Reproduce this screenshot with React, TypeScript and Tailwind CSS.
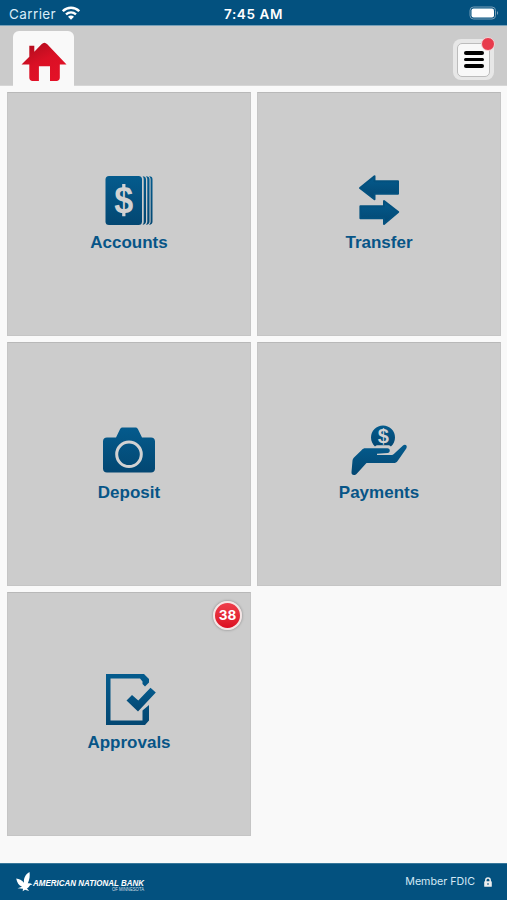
import type { ReactNode } from "react";

const NAVY = "#03517f";

function Icon({ children }: { children: ReactNode }) {
  return (
    <svg width="100" height="60" viewBox="-1 0 100 60" fill="url(#tile-blue)" aria-hidden="true">
      {children}
    </svg>
  );
}

function AccountsIcon() {
  return (
    <Icon>
      <rect x="25.5" y="11" width="36.5" height="49" rx="3.5" />
      <path d="M62.5 11.3c2.2 0 3.5 1.2 3.5 3.2v42c0 2-1.3 3.2-3.500 3.200 1-.8 1.200-1.800 1.200-3.200v-42c0-1.400-.2-2.400-1.200-3.200Z" />
      <path d="M65.800 11.300c2.600 0 3.700 1.200 3.700 3.200v42c0 2-1.100 3.200-3.700 3.200 1-.8 1.500-1.800 1.500-3.200v-42c0-1.400-.5-2.400-1.500-3.200Z" />
      <path d="M69 11.300c2.700 0 3.500 1.200 3.500 3.200v42c0 2-.8 3.200-3.500 3.200 1-.8 1.600-1.800 1.600-3.200v-42c0-1.400-.6-2.400-1.600-3.200Z" />
      <text x="34.300" y="47.500" fontSize="38" fontWeight="700" fill="#d2d2d2" textLength="19" lengthAdjust="spacingAndGlyphs">
        $
      </text>
      <path d="M42.200 19h3.200v5h-3.200ZM42.200 46.500h3.200v4.800h-3.200Z" fill="#d2d2d2" />
    </Icon>
  );
}

function TransferIcon() {
  return (
    <Icon>
      <g stroke={NAVY} strokeWidth="2" strokeLinejoin="round">
        <path d="M30 23 44.500 11.200V16.300H68V28.700H44.500V34.200Z" />
        <path d="M68.200 47 54 36V41.200H30.400V53.300H54V59Z" />
      </g>
    </Icon>
  );
}

function DepositIcon() {
  return (
    <Icon>
      <path d="M27 22.500h9l4-8.200c.6-1.300 1.300-1.800 2.700-1.800h12.600c1.400 0 2.100.5 2.700 1.800l4 8.200h9c2.500 0 4 1.500 4 4v27c0 2.500-1.500 4-4 4H27c-2.500 0-4-1.500-4-4v-27c0-2.500 1.500-4 4-4Z" />
      <circle cx="49" cy="39.300" r="12.300" fill="none" stroke="#d2d2d2" strokeWidth="3" />
    </Icon>
  );
}

function PaymentsIcon() {
  return (
    <Icon>
      <path d="M45 31.500C42.700 29.300 41 26.300 41 22.500a12 12 0 0 1 24 0c0 3.600-1.500 6.700-4.100 9-.7-1-1.600-1.300-3.300-1.300H48c-1.400 0-2.300.4-3 1.300Z" />
      <text x="53.200" y="28" textAnchor="middle" fontSize="20" fontWeight="700" fill="#d2d2d2">
        $
      </text>
      <path d="M35.500 33.200H57.500c3 0 3 4.600 0 4.800L47 38.800V40H61c1.500 0 2.300-.4 3.100-1.200L73 30.400c2.500-1.700 4.800.5 3.300 3L67.600 46c-1.100 1.500-2 2-4 2H36.500L26.500 59c-.8.800-1.500 1-2.500 1-1.800 0-2.700-1.200-2.500-3L22.500 45.500c.2-1.200.6-2 1.500-3l7.500-7.300c1.200-1.400 2.300-2 4-2Z" />
    </Icon>
  );
}

function ApprovalsIcon() {
  return (
    <Icon>
      <path d="M26 9h38l5 5v3.500L65 21.500 62.500 19v-2.500L60 13.500H30.500v42h32V45.500L69 40v15.500l-4 4.500H26Z" />
      <path d="m46.500 35.500 5.500-5.500 6.300 5.500L70.500 22.800l5.300 4.700L58 46.500Z" />
    </Icon>
  );
}

const TILES = [
  { label: "Accounts", icon: <AccountsIcon /> },
  { label: "Transfer", icon: <TransferIcon /> },
  { label: "Deposit", icon: <DepositIcon /> },
  { label: "Payments", icon: <PaymentsIcon /> },
  { label: "Approvals", icon: <ApprovalsIcon />, badge: 38 },
];

function StatusBar() {
  return (
    <div className="grid h-[26px] grid-cols-3 items-center border-b border-[#77a0b8] bg-[#03517f] px-2 font-[Inter,sans-serif] text-[13.5px] text-white">
      <div className="flex items-center gap-1.5 pl-px text-[#d9edf8]">
        <span className="w-[47px] pt-0.5 leading-5 tracking-[0.4px]">Carrier</span>
        <svg width="18" height="14" viewBox="0 0 18 14" fill="none" stroke="white" strokeWidth="2.400">
          <path d="M.8 5.200c4.700-4.600 11.700-4.600 16.400 0M4 8.400c3-2.700 7-2.700 10 0" />
          <path d="m9 13.800-3-3.100c1.800-1.500 4.200-1.500 6 0Z" fill="white" stroke="none" />
        </svg>
      </div>
      <div className="pt-0.5 text-center font-semibold leading-5 tracking-[0.6px]">7:45 AM</div>
      <svg width="30" height="14" viewBox="0 0 30 14" className="justify-self-end">
        <rect x="1" y="1" width="25.500" height="12" rx="3.500" fill="none" stroke="#799fb8" />
        <rect x="2.500" y="2.500" width="22.500" height="9" rx="2" fill="white" />
        <path d="M28 5c1.500 1 1.500 3 0 4Z" fill="#799fb8" />
      </svg>
    </div>
  );
}

function Header() {
  return (
    <header className="flex h-[60px] items-end justify-between border-b border-[#d6d6d6] bg-[#cbcbcb] px-[13px]">
      <button className="-mb-px flex h-[55px] w-[61px] items-center justify-center rounded-t-md bg-[#f9f9f9]">
        <svg width="46" height="41" viewBox="0 0 46 41" className="mt-1.5">
          <defs>
            <linearGradient id="home-red" x1="0" y1="0" x2=".6" y2="1">
              <stop offset="0" stopColor="#a90c1c" />
              <stop offset=".55" stopColor="#da1025" />
              <stop offset="1" stopColor="#e31127" />
            </linearGradient>
          </defs>
          <path
            d="M.5 23.500 8.300 15.800V4.800h5v6L20.500 3.300c2-2 3.800-2 5.800 0L45.500 23.500H38.800V36.500c0 2-1.200 3.500-3.300 3.500H29V25.300H17.900V40H11.500C9.500 40 8.300 38.700 8.300 36.500V23.500Z"
            fill="url(#home-red)"
          />
        </svg>
      </button>
      <button className="relative mb-[5px] h-[41px] w-[41px] rounded-[8px] bg-[#e7e7e7] p-1">
        <span className="flex h-[34px] w-[33px] flex-col items-center justify-center gap-[3px] rounded-[5px] border border-[#bcbcbc] bg-[#f8f8f8] pb-px">
          <span className="h-[3.500px] w-5 rounded-full bg-black" />
          <span className="h-[3.500px] w-5 rounded-full bg-black" />
          <span className="h-[3.500px] w-5 rounded-full bg-black" />
        </span>
        <span className="absolute -right-[1px] -top-[2px] h-[14px] w-[14px] rounded-full border border-[#f1d5d7] bg-[#e83b4d]" />
      </button>
    </header>
  );
}

function Eagle() {
  return (
    <svg width="17" height="20" viewBox="0 0 17 20" fill="white">
      <path d="M.2 6.500c3 .7 5.700 1.500 7.800 4.200C7.500 6.300 9.300 2.500 13.500 0c.6 3.700.1 7.600-1.700 11.300 1.900-.3 3.400.1 4.800 1.200-1.900 0-2.800.7-3.500 2-.7 1.200-1.500 1.700-2.300 1.800l2.400 2.800-4.200-1.400-2.300 1.600.3-2.500-5.500-.5 4.500-1.500C2.800 13.500 1 10.500.2 6.500Z" />
    </svg>
  );
}

function Footer() {
  return (
    <footer className="flex h-[37px] items-center justify-between border-t border-[#37779a] bg-[#03517f] pl-4 pr-[15px] text-white">
      <div className="flex items-center">
        <Eagle />
        <svg width="115" height="24" viewBox="0 -2 115 24" fill="white" className="overflow-visible">
          <text x="0" y="14" fontSize="9.500" fontWeight="700" fontStyle="italic" textLength="111" lengthAdjust="spacingAndGlyphs">
            AMERICAN NATIONAL BANK
          </text>
          <text x="79" y="19" fontSize="4.500" fillOpacity=".8" textLength="32" lengthAdjust="spacingAndGlyphs">
            OF MINNESOTA
          </text>
        </svg>
      </div>
      <div className="flex items-center gap-[9px] font-[Inter,sans-serif] text-[10.700px] text-[#d3e9f5]">
        <span>Member FDIC</span>
        <svg width="8" height="10" viewBox="0 0 8 10" fill="#eeeeee">
          <path d="M1.800 5V3.200a2.200 2.200 0 0 1 4.400 0V5" fill="none" stroke="#eeeeee" strokeWidth="1.500" />
          <rect x=".2" y="4.300" width="7.600" height="5.500" rx=".6" />
          <path d="M3.500 6h1v2h-1Z" fill={NAVY} />
        </svg>
      </div>
    </footer>
  );
}

export default function App() {
  return (
    <div className="flex h-[900px] w-[507px] flex-col overflow-hidden bg-[#f9f9f9] font-['Liberation_Sans',Arial,sans-serif]">
      {/* Shared fill for the tile icons */}
      <svg width="0" height="0" className="absolute">
        <linearGradient id="tile-blue" x1="0" y1="0" x2="0" y2="1">
          <stop offset="0" stopColor="#045b8d" />
          <stop offset="1" stopColor="#034772" />
        </linearGradient>
      </svg>
      <StatusBar />
      <Header />
      <main className="grid flex-1 auto-rows-[244px] grid-cols-[244px_244px] content-start gap-1.5 pl-[7px] pt-1.5">
        {TILES.map((tile) => (
          <button
            key={tile.label}
            className="relative flex flex-col items-center border border-[#c5c5c5] border-t-[#b8b8b8] bg-[#cccccc] pt-[72px]"
          >
            {tile.icon}
            <span className="mt-1.5 text-[17px] font-bold leading-6 text-[#075587]">{tile.label}</span>
            {tile.badge && (
              <span className="absolute right-[8px] top-[8px] flex h-[29px] w-[29px] items-center justify-center rounded-full border-2 border-[#f4e5e5] bg-linear-to-b from-[#ee3d4b] to-[#dc0920] font-[Inter,sans-serif] text-[13.5px] font-bold text-white shadow-[0_0_2px_1px_#aaaaaa]">
                {tile.badge}
              </span>
            )}
          </button>
        ))}
      </main>
      <Footer />
    </div>
  );
}
